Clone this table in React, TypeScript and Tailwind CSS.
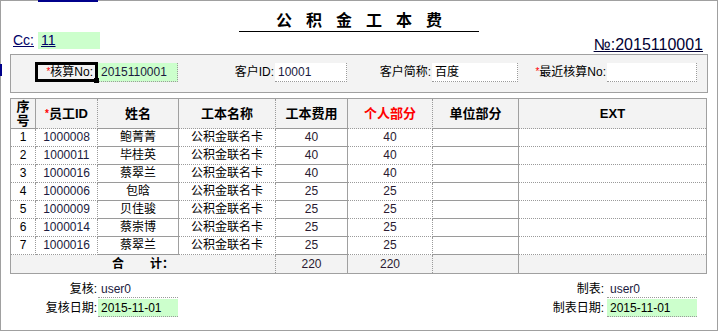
import React from 'react';

const rows = [
  { no: 1, id: '1000008', name: '鲍菁菁', card: '公积金联名卡', fee: 40, own: 40 },
  { no: 2, id: '1000011', name: '毕桂英', card: '公积金联名卡', fee: 40, own: 40 },
  { no: 3, id: '1000016', name: '蔡翠兰', card: '公积金联名卡', fee: 40, own: 40 },
  { no: 4, id: '1000006', name: '包晗', card: '公积金联名卡', fee: 25, own: 25 },
  { no: 5, id: '1000009', name: '贝佳骏', card: '公积金联名卡', fee: 25, own: 25 },
  { no: 6, id: '1000014', name: '蔡崇博', card: '公积金联名卡', fee: 25, own: 25 },
  { no: 7, id: '1000016', name: '蔡翠兰', card: '公积金联名卡', fee: 25, own: 25 },
];

// right borders of the grid, solid every other column as in the form
const solidR = 'border-r border-solid border-r-[#a0a0a0]';
const dotR = 'border-r border-dotted border-r-[#9a9a9a]';
const dotB = 'border-b border-dotted border-b-[#9a9a9a]';

const Star = () => <span className="text-[#ff0000] text-[10px] align-top">*</span>;

const App: React.FC = () => {
  return (
    <div className="relative w-[718px] h-[331px] border border-[#a0a0a0] bg-white text-[12px] text-black font-['Liberation_Sans','Noto_Sans_CJK_SC',sans-serif]">
      {/* selection marks from the host page */}
      <div className="absolute -top-px left-[37px] w-[60px] h-[2px] bg-[#00008b]"></div>
      <div className="absolute top-[63px] -left-px w-[2px] h-[12px] bg-[#00008b]"></div>

      {/* title */}
      <div className="h-[31px] flex justify-center items-end">
        <div className="w-[240px] border-b border-black text-center text-[16px] leading-[18px] font-bold tracking-[14px] pl-[14px] pb-[1px]">
          公积金工本费
        </div>
      </div>

      <div className="h-[17px] flex justify-between items-start pl-[12px] pr-[14px]">
        <div className="flex items-center h-[17px] text-[14px] text-[#000066]">
          <span className="underline">Cc:</span>
          <span className="ml-[4px] w-[62px] h-[17px] bg-[#ccffcc] pl-[3px] leading-[17px] underline">11</span>
        </div>
        <div className="text-[16px] leading-[17px] mt-[4px] text-[#000033] underline">№:2015110001</div>
      </div>

      {/* header fields */}
      <div className="mt-[5px] mx-[9px] h-[39px] border border-[#a0a0a0] bg-[#f3f3f3] pt-[8px]">
        <div className="grid grid-cols-[24px_63px_80px_97px_72px_85px_86px_89px_90px] h-[18px] leading-[18px]">
          <div></div>
          <div className="relative border-[3px] border-black -mt-px h-[20px] leading-[14px] text-right pr-[2px]">
            <Star />核算No:
            <div className="absolute -right-[4px] -bottom-[4px] w-[5px] h-[5px] bg-black"></div>
          </div>
          <div className="bg-[#ccffcc] pl-[3px] border-r border-b border-dotted border-[#9a9a9a] text-[#1a1a40]">2015110001</div>
          <div className="text-right pr-[1px]">客户ID:</div>
          <div className="bg-white pl-[3px] border-r border-b border-dotted border-[#9a9a9a] text-[#1a1a40]">10001</div>
          <div className="text-right pr-[1px]">客户简称:</div>
          <div className="bg-white pl-[3px] border-r border-b border-dotted border-[#9a9a9a]">百度</div>
          <div className="text-right pr-[1px]">
            <Star />最近核算No:
          </div>
          <div className="bg-white border-r border-b border-dotted border-[#9a9a9a]"></div>
        </div>
      </div>

      {/* detail grid */}
      <table className="mt-[5px] ml-[9px] w-[697px] table-fixed border-separate border-spacing-0 border border-[#a0a0a0] text-center">
        <colgroup>
          <col className="w-[25px]" />
          <col className="w-[62px]" />
          <col className="w-[81px]" />
          <col className="w-[97px]" />
          <col className="w-[72px]" />
          <col className="w-[85px]" />
          <col className="w-[86px]" />
          <col />
        </colgroup>
        <thead>
          <tr className="h-[30px] bg-[#f3f3f3] font-bold text-[13px] leading-[14px]">
            <th className={`${solidR} ${dotB}`}>序<br />号</th>
            <th className={`${dotR} ${dotB}`}><Star />员工ID</th>
            <th className={`${solidR} ${dotB}`}>姓名</th>
            <th className={`${dotR} ${dotB}`}>工本名称</th>
            <th className={`${solidR} ${dotB}`}>工本费用</th>
            <th className={`${dotR} ${dotB} text-[#ff0000]`}>个人部分</th>
            <th className={`${solidR} ${dotB}`}>单位部分</th>
            <th className={dotB}>EXT</th>
          </tr>
        </thead>
        <tbody className="leading-[17px]">
          {rows.map((r) => (
            <tr key={r.no} className="h-[18px]">
              <td className={`${dotR} ${dotB}`}>{r.no}</td>
              <td className={`${dotR} ${dotB} text-[#1a1a40]`}>{r.id}</td>
              <td className={`${solidR} ${dotB}`}>{r.name}</td>
              <td className={`${dotR} ${dotB}`}>{r.card}</td>
              <td className={`${solidR} ${dotB} text-[#2a1a30]`}>{r.fee}</td>
              <td className={`${dotR} ${dotB} text-[#2a1a30]`}>{r.own}</td>
              <td className={`${solidR} ${dotB}`}></td>
              <td className={dotB}></td>
            </tr>
          ))}
          <tr className="h-[18px] bg-[#f3f3f3]">
            <td colSpan={4} className={`${dotR} font-bold`}>
              合<span className="inline-block w-[26px]"></span>计：
            </td>
            <td className={`${solidR} text-[#2a1a30]`}>220</td>
            <td className={`${dotR} text-[#2a1a30]`}>220</td>
            <td className={solidR}></td>
            <td></td>
          </tr>
        </tbody>
      </table>

      {/* sign-off */}
      <div className="mt-[6px] grid grid-cols-[97px_80px_1fr_90px] grid-rows-[18px_18px] gap-y-px pr-[20px] leading-[18px]">
        <div className="text-right pr-[1px]">复核:</div>
        <div className="pl-[3px] border-b border-dotted border-[#9a9a9a] text-[#1a1a40]">user0</div>
        <div className="text-right pr-[3px]">制表:</div>
        <div className="pl-[3px] border-b border-dotted border-[#9a9a9a] text-[#1a1a40]">user0</div>
        <div className="text-right pr-[1px]">复核日期:</div>
        <div className="pl-[3px] bg-[#ccffcc] border-b border-dotted border-[#9a9a9a]">2015-11-01</div>
        <div className="text-right pr-[3px]">制表日期:</div>
        <div className="pl-[3px] bg-[#ccffcc] border-b border-dotted border-[#9a9a9a]">2015-11-01</div>
      </div>
    </div>
  );
};

export default App;
